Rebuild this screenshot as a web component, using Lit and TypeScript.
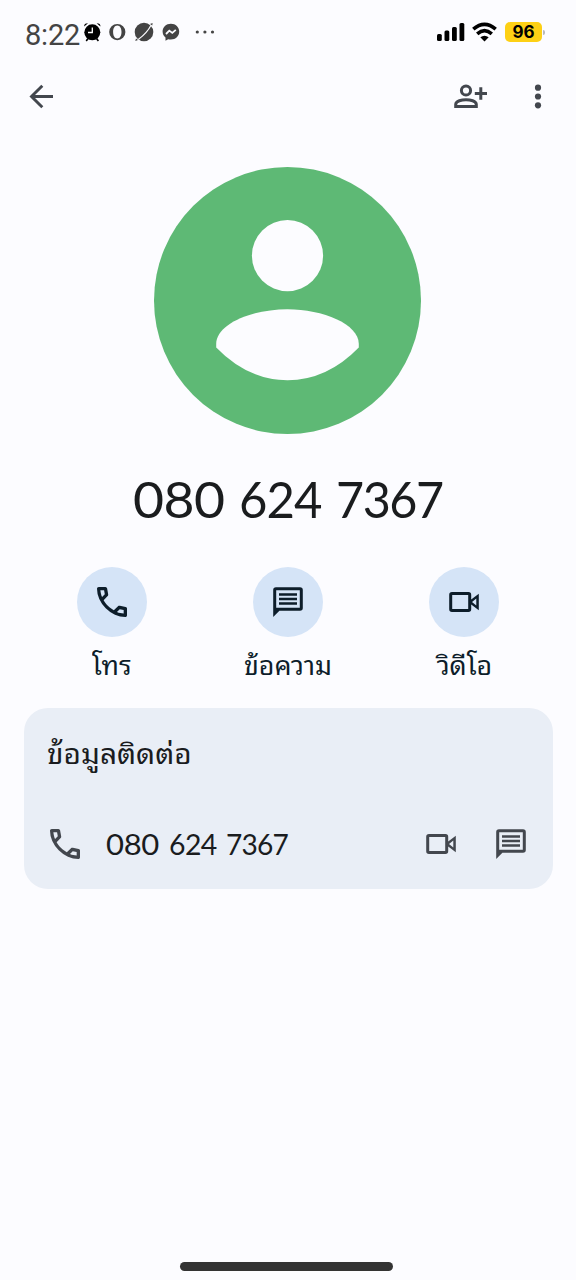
import { LitElement, html, css } from "lit";
import { customElement } from "lit/decorators.js";

const phone = html`<svg class="phone" viewBox="0 0 24 24" fill="currentColor"><path d="M19.95 21q-3.125 0-6.175-1.362t-5.55-3.863t-3.862-5.55T3 4.05q0-.45.3-.75t.75-.3H8.1q.35 0 .625.238t.325.562l.65 3.5q.05.4-.025.675T9.4 8.45L6.975 10.9q.5.925 1.187 1.787t1.513 1.663q.775.775 1.625 1.438T13.1 17l2.35-2.35q.225-.225.588-.337t.712-.063l3.45.7q.35.1.575.363T21 15.9v4.05q0 .45-.3.75t-.75.3M6.025 9l1.65-1.65L7.25 5H5.025q.125 1.025.35 2.025T6.025 9m8.95 8.95q.975.425 1.988.675T19 18.95v-2.2l-2.35-.475z"/></svg>`;
const chat = html`<svg class="ic" viewBox="0 0 36 36"><path fill="currentColor" fill-rule="evenodd" d="M3.2 33V6Q3.200 3.200 6 3.200H30Q32.800 3.200 32.800 6V24Q32.800 26.800 30 26.800H9.400ZM6.200 6.200V23.800H29.800V6.200ZM9 9.200H27V11.700H9ZM9 13.700H27V16.200H9ZM9 18.200H27V20.700H9Z"/></svg>`;
const video = html`<svg class="ic" viewBox="0 0 36 36"><path fill="currentColor" fill-rule="evenodd" d="M6 8H22.500Q25.200 8 25.200 10.700V15.600L32.800 9.700V26.300L25.200 20.400V25.300Q25.200 28 22.500 28H6Q3.200 28 3.200 25.300V10.700Q3.200 8 6 8ZM6.200 11V25H22.200V11ZM30.300 14.600 26 18 30.300 21.400Z"/></svg>`;

@customElement("app-root")
export class AppRoot extends LitElement {
  static styles = css`
    :host { display: flex; flex-direction: column; width: 576px; height: 1280px; background: #fcfcff; color: #1a1c1e; font-family: Lato, "Noto Sans Thai Looped", "Noto Looped Thai", Waree, Loma, Garuda, Umpush, "Noto Sans Thai", "Noto Sans", sans-serif; overflow: hidden; }
    * { box-sizing: border-box; }
    svg { display: block; flex: none; }
    .status { display: flex; align-items: center; height: 64px; padding: 0 34px 0 25px; }
    .time { width: 57px; margin-top: 6px; font: 29px/34px Roboto, sans-serif; color: #444; letter-spacing: -.2px; }
    .spacer { flex: 1; }
    .battery { display: flex; align-items: center; justify-content: center; width: 37px; height: 20px; margin-left: 7px; border-radius: 5px; background: #fdd015; color: #000; font: 700 17px/20px Inter, sans-serif; }
    .cap { width: 2px; height: 5px; margin: 0 -3px 0 1px; border-radius: 0 2px 2px 0; background: #b9b9bb; }
    .bar { display: flex; justify-content: space-between; align-items: center; height: 66px; padding: 0 20px 0 23px; color: #43474e; }
    .tools { display: flex; gap: 32px; align-items: center; }
    .avatar { margin: 37px 0 0 154px; }
    .number { display: grid; grid-template-columns: 106px 97.5px auto; padding-left: 132.5px; margin-top: 35px; height: 60px; font-size: 50px; line-height: 60px; white-space: pre; }
    .a, .b, .c { transform-origin: 0 50%; }
    .a { transform: scaleX(1.070); letter-spacing: -.01em; }
    .b { transform: scaleX(.98); letter-spacing: -.02em; }
    .c { transform: scaleX(.97); letter-spacing: -.03em; }
    .actions { display: flex; justify-content: space-between; padding: 0 24px; margin-top: 38px; }
    .action { display: flex; flex-direction: column; align-items: center; width: 176px; color: #0d1d2a; }
    .round { display: grid; place-items: center; width: 70px; height: 70px; border-radius: 50%; background: #d5e4f7; }
    .label { margin-top: 9.500px; height: 36px; font-size: 25.500px; line-height: 36px; white-space: nowrap; transform: scaleX(1.050); }
    .ic { width: 36px; height: 36px; }
    .phone { width: 40px; height: 40px; }
    .card { display: flex; flex-direction: column; margin: 25.500px 23.5px 0; height: 181px; border-radius: 24px; background: #e9eef6; padding: 26px 23.5px 0; }
    .title { height: 40px; font-size: 27.500px; line-height: 40px; white-space: nowrap; transform: scaleX(1.085); transform-origin: 0 50%; }
    .row { display: flex; align-items: center; height: 48px; margin-top: 45.6px; color: #43474e; }
    .row .phone { margin-left: -2px; }
    .value { display: grid; grid-template-columns: 63px 57px auto; white-space: pre; margin-left: 20.500px; color: #1a1c1e; font-size: 29px; line-height: 40px; }
    .row .ic + .ic { margin-left: 34px; }
    .home { width: 213px; height: 9px; margin: auto 0 9px 180px; border-radius: 5px; background: #333; }
  `;

  render() {
    const digits = html`<span class="a">080 </span><span class="b">624 </span><span class="c">7367</span>`;
    return html`
      <div class="status">
        <span class="time">8:22</span>
        <svg width="140" height="24" viewBox="82 20 140 24" fill="#444">
          <g fill="#000"><circle cx="92.300" cy="32.300" r="8"/><path d="M84.200 26.500Q83.800 23.300 88 23.200ZM100.400 26.500Q100.800 23.300 96.600 23.200ZM87.300 38l1.500 1-2 2.500-1.200-1ZM97.300 38l-1.500 1 2 2.500 1.200-1Z"/></g>
          <path d="M92.300 27.500V32.500H88" fill="none" stroke="#fff" stroke-width="1.300"/>
          <path fill-rule="evenodd" d="M117.300 24a8.100 8.100 0 1 0 0 16.200a8.100 8.100 0 1 0 0-16.200ZM117.300 25.600c2.700 0 4.200 2.900 4.200 6.500s-1.500 6.500-4.200 6.500-4.200-2.900-4.200-6.500 1.500-6.500 4.200-6.500Z"/>
          <circle cx="144" cy="32" r="9.300"/><path d="M150 24 152.600 22.900 152.300 25.500ZM138 40 135.300 41 136 38.500Z"/><path d="M151 25.200Q147 33 138.500 39.200" fill="none" stroke="#fcfcff" stroke-width="1.200"/>
          <path d="M170.900 23.700c-4.800 0-8.300 3.300-8.300 7.900 0 2.500 1.100 4.600 2.900 6v3.100l2.700-1.500c.8.200 1.700.4 2.700.4 4.800 0 8.300-3.400 8.300-8s-3.500-7.900-8.300-7.900Z"/>
          <path d="m166 34 3.300-3.400 3 2.300 3.500-3" fill="none" stroke="#fcfcff" stroke-width="1.800"/>
          <circle cx="197.300" cy="32" r="1.600"/><circle cx="204.900" cy="32" r="1.600"/><circle cx="212.500" cy="32" r="1.600"/>
        </svg>
        <span class="spacer"></span>
        <svg width="62" height="24" viewBox="436 20 62 24">
          <rect x="437" y="34" width="4.800" height="7" rx="1.500"/><rect x="444.500" y="30.500" width="4.800" height="10.500" rx="1.500"/><rect x="452" y="27" width="4.800" height="14" rx="1.500"/><rect x="459.500" y="23" width="4.800" height="18" rx="1.500"/>
          <g fill="none" stroke="#000" stroke-width="3.600"><path d="M473.300 29.200Q484.500 19.600 495.700 29.200"/><path d="M477.200 33.800Q484.500 27.600 491.800 33.800"/></g><path d="M480.300 37.200Q484.500 34.200 488.700 37.200L484.500 41.500Z"/>
        </svg>
        <span class="battery">96</span><span class="cap"></span>
      </div>
      <div class="bar">
        <svg width="36" height="36" viewBox="23 79 36 36" fill="none" stroke="currentColor" stroke-width="2.900"><path d="M53 96.500H31.500M42.300 85.800 31.500 96.500 42.300 107.200"/></svg>
        <div class="tools">
          <svg width="36" height="36" viewBox="452 79 36 36" fill="none" stroke="currentColor" stroke-width="3"><circle cx="466" cy="90.500" r="4.600"/><path d="M455.700 106.500H476.300V104.500C476.300 100.800 470 99.700 466 99.700S455.700 100.800 455.700 104.500ZM480.800 87.300V99.700M474.800 93.500H487"/></svg>
          <svg width="36" height="36" viewBox="520 79 36 36" fill="currentColor"><circle cx="538" cy="87.700" r="3.100"/><circle cx="538" cy="96.500" r="3.100"/><circle cx="538" cy="105.300" r="3.100"/></svg>
        </div>
      </div>
      <svg class="avatar" width="267" height="267" viewBox="0 0 267 267"><circle cx="133.500" cy="133.500" r="133.500" fill="#5eb975"/><g fill="#fcfcff"><circle cx="133.500" cy="88.700" r="35.600"/><path d="M62.200 180.500V177C62.200 157 98 142.200 133.500 142.200S204.800 157 204.800 177V180.500Q173 213.200 133.500 213.200T62.200 180.500Z"/></g></svg>
      <div class="number">${digits}</div>
      <div class="actions">
        <div class="action"><span class="round">${phone}</span><span class="label">โทร</span></div>
        <div class="action"><span class="round">${chat}</span><span class="label">ข้อความ</span></div>
        <div class="action"><span class="round">${video}</span><span class="label">วิดีโอ</span></div>
      </div>
      <div class="card">
        <div class="title">ข้อมูลติดต่อ</div>
        <div class="row">${phone}<span class="value">${digits}</span><span class="spacer"></span>${video}${chat}</div>
      </div>
      <div class="home"></div>
    `;
  }
}
